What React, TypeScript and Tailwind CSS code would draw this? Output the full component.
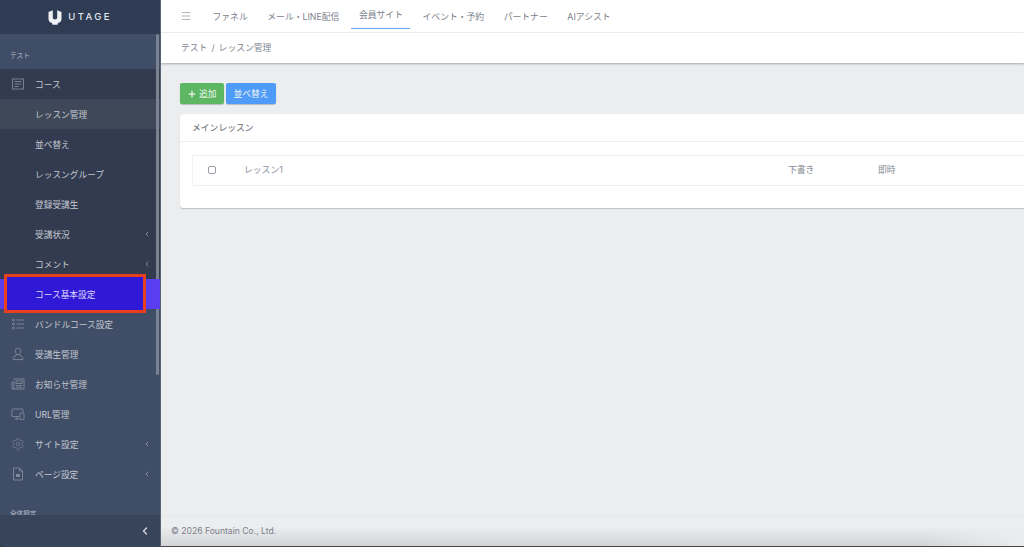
import { ChevronLeft, Menu, Plus, Settings } from 'lucide-react'
import type { ReactNode } from 'react'

const FONT = "font-['Inter','Noto_Sans_CJK_JP',sans-serif]"

const iconProps = { width: 14, height: 14, viewBox: '0 0 14 14', fill: 'none', stroke: 'currentColor', strokeWidth: 0.9 }

const NotesIcon = () => (
  <svg {...iconProps}>
    <rect x="1.5" y="2" width="11" height="10" />
    <path d="M3.5 4.5h7M3.5 7h7M3.5 9.5h4" />
  </svg>
)

const BundleIcon = () => (
  <svg {...iconProps}>
    <circle cx="2.5" cy="3" r="1" />
    <circle cx="2.5" cy="7" r="1" />
    <circle cx="2.5" cy="11" r="1" />
    <path d="M5.5 3h7.5M5.5 7h7.5M5.5 11h7.5" />
  </svg>
)

const StudentIcon = () => (
  <svg {...iconProps}>
    <path d="M7 1.2c-1.7 0-2.7 1.2-2.7 3S5.3 7.6 7 7.6s2.7-1.6 2.7-3.4-1-3-2.7-3z" />
    <path d="M5.3 7.2v1.2L3 9.6c-.5.3-.8.8-.8 1.4v1.6h9.6V11c0-.6-.3-1.100-.8-1.400L8.700 8.400V7.200" />
  </svg>
)

const NewsIcon = () => (
  <svg {...iconProps}>
    <path d="M3 3V2h10v10H1V5h2v7" />
    <rect x="5" y="4" width="6" height="2.500" />
    <path d="M5 8.500h6M5 10.200h6" />
  </svg>
)

const DevicesIcon = () => (
  <svg {...iconProps}>
    <path d="M8 9.500H1.500a.6.6 0 0 1-.6-.6V2.600a.6.6 0 0 1 .6-.6h10a.6.6 0 0 1 .6.6V5" />
    <path d="M4 12h4M6 9.500V12" />
    <rect x="9" y="6" width="4" height="6.500" rx=".6" />
  </svg>
)

const PageIcon = () => (
  <svg {...iconProps}>
    <path d="M2.500 1h6l3 3v9h-9z" />
    <path d="M8.500 1v3h3" />
    <rect x="5" y="7" width="4" height="3" fill="currentColor" stroke="none" />
  </svg>
)

const COURSE_ITEMS = [
  { label: 'レッスン管理', current: true },
  { label: '並べ替え' },
  { label: 'レッスングループ' },
  { label: '登録受講生' },
  { label: '受講状況', arrow: true },
  { label: 'コメント', arrow: true },
]

const LOWER_ITEMS = [
  { label: 'バンドルコース設定', icon: <BundleIcon /> },
  { label: '受講生管理', icon: <StudentIcon /> },
  { label: 'お知らせ管理', icon: <NewsIcon /> },
  { label: 'URL管理', icon: <DevicesIcon /> },
  { label: 'サイト設定', icon: <Settings size={14} strokeWidth={1} />, arrow: true },
  { label: 'ページ設定', icon: <PageIcon />, arrow: true },
]

const TABS = ['ファネル', 'メール・LINE配信', '会員サイト', 'イベント・予約', 'パートナー', 'AIアシスト']

function NavRow({ label, icon, arrow, className = '' }: { label: string; icon?: ReactNode; arrow?: boolean; className?: string }) {
  return (
    <div className={`flex h-[30px] items-center pr-[9px] text-[8.7px] ${className}`}>
      <span className="flex w-[35px] shrink-0 justify-center text-[#808a9b]">{icon}</span>
      <span className="flex-1 whitespace-nowrap pt-[4px]">{label}</span>
      {arrow && <ChevronLeft size={8} strokeWidth={1.8} className="text-[#b4bbc6]" />}
    </div>
  )
}

function Sidebar() {
  return (
    <aside className="flex h-full w-[160px] shrink-0 flex-col overflow-hidden rounded-bl-[5px] bg-[#404d66] text-[#c3c8d1]">
      <div className="flex h-[34px] shrink-0 items-center justify-center gap-[6px] bg-[#303c54]">
        <svg width="14" height="15" viewBox="0 0 14 15" fill="#eef0f3">
          <path d="M0.500 2 L4.800 0.300 V7.500 C4.800 8.800 5.700 9.500 7 9.500 C8.300 9.500 9.200 8.800 9.200 7.500 V0.300 L13.500 2 V9 C13.500 11.200 12 12.600 10 13.100 L9.500 14.700 H4.500 L4 13.100 C2 12.600 0.500 11.200 0.500 9 Z" />
        </svg>
        <span className="text-[9.5px] font-medium tracking-[0.25em] text-[#e4e7ec]">UTAGE</span>
      </div>
      <div className="relative flex-1 overflow-hidden">
        <div className="flex h-[35px] items-end pb-[7px] pl-[10px] text-[6.6px] text-[#b6bcc8]">テスト</div>
        <div className="bg-[#323b4f]">
          <NavRow label="コース" icon={<NotesIcon />} />
          {COURSE_ITEMS.map(item => (
            <NavRow key={item.label} label={item.label} arrow={item.arrow} className={item.current ? 'bg-[#3f4858]' : ''} />
          ))}
        </div>
        <div className="relative z-10">
          <NavRow label="コース基本設定" className="bg-[#5b3df0] text-[#e6e3fb]" />
          <div className="absolute top-[-5px] left-[4px] flex h-[39px] w-[142px] items-center border-[3px] border-[#e8401c] bg-[#3019d6] pt-[4px] pl-[28px] text-[8.7px] text-[#dcd8fb]">
            コース基本設定
          </div>
        </div>
        {LOWER_ITEMS.map(item => (
          <NavRow key={item.label} label={item.label} icon={item.icon} arrow={item.arrow} />
        ))}
        <div className="pt-[21px] pl-[10px] text-[6.6px] text-[#b6bcc8]">全体設定</div>
        {/* scrollbar thumb */}
        <div className="absolute top-0 right-[1px] h-[341px] w-[3px] rounded-full bg-[#7b8290]" />
      </div>
      <div className="flex h-[32px] shrink-0 items-center justify-end bg-[#38445a] pr-[9px]">
        <ChevronLeft size={12} strokeWidth={3.2} className="text-[#c9ced6]" />
      </div>
    </aside>
  )
}

function TopBar() {
  return (
    <>
      <header className="flex h-[33px] shrink-0 items-center border-b border-[#eef0f2] bg-white pl-[19px] text-[8.8px] text-[#7b818c]">
        <Menu size={12} strokeWidth={1} className="mr-[13px] text-[#636a75]" />
        {TABS.map(tab => (
          <div
            key={tab}
            className={`mr-[4.6px] flex h-[25px] items-center whitespace-nowrap px-[7.5px] ${tab === '会員サイト' ? 'border-b-[1.5px] border-[#6da5f5] pb-[1px]' : 'pt-[1px]'}`}
          >
            {tab}
          </div>
        ))}
      </header>
      <div className="flex h-[30px] shrink-0 items-center gap-[4px] bg-white pl-[20px] text-[8.8px] text-[#7f8590] shadow-[0_1px_2px_rgba(60,70,85,0.4)]">
        <span>テスト</span>
        <span>/</span>
        <span>レッスン管理</span>
      </div>
    </>
  )
}

function LessonCard() {
  return (
    <div className="w-[870px] rounded-[3px] bg-white shadow-[0_1px_1px_rgba(60,70,85,0.28)]">
      <div className="flex h-[28px] items-center border-b border-[#eceef0] pl-[12px] text-[8.8px] text-[#5f6570]">メインレッスン</div>
      <div className="px-[12px] pt-[13px] pb-[22px]">
        <div className="flex h-[31px] items-center border border-[#eff0f2] pb-[1px] text-[8.8px] text-[#8a8fa0]">
          <span className="ml-[15px] h-[8px] w-[8px] rounded-[2px] border border-[#9a9da3]" />
          <span className="ml-[28px] w-[544px]">レッスン1</span>
          <span className="w-[90px] text-[#858b94]">下書き</span>
          <span className="text-[#858b94]">即時</span>
        </div>
      </div>
    </div>
  )
}

export default function App() {
  return (
    <div className={`flex h-[547px] w-[1024px] overflow-hidden bg-[#3a3c3e] ${FONT}`}>
      <Sidebar />
      <main className="flex min-w-0 flex-1 flex-col border-l border-[#5a6478] bg-[#ebedef]">
        <TopBar />
        <div className="flex-1 overflow-hidden px-[19px] pt-[20px]">
          <div className="mb-[10px] flex gap-[2px] text-[8.8px] text-[#eef5ee]">
            <button className="flex h-[21px] w-[44px] items-center justify-center gap-[1.5px] rounded-[2px] bg-[#5cb662] shadow-[0_1px_1px_rgba(60,70,85,0.3)]">
              <Plus size={10} strokeWidth={3} />
              追加
            </button>
            <button className="h-[21px] w-[50px] rounded-[2px] bg-[#4f9bfa] shadow-[0_1px_1px_rgba(60,70,85,0.3)]">並べ替え</button>
          </div>
          <LessonCard />
        </div>
        <footer className="flex h-[32px] shrink-0 items-center border-t border-b border-t-[#e6e8ea] border-b-[#44464a] bg-[linear-gradient(to_right,transparent_88%,#ebedef_100%),linear-gradient(to_bottom,#ebedef_35%,#d3d4d6_100%)] pl-[10px] text-[8.6px] text-[#7b818c]">
          © 2026 Fountain Co., Ltd.
        </footer>
      </main>
    </div>
  )
}
